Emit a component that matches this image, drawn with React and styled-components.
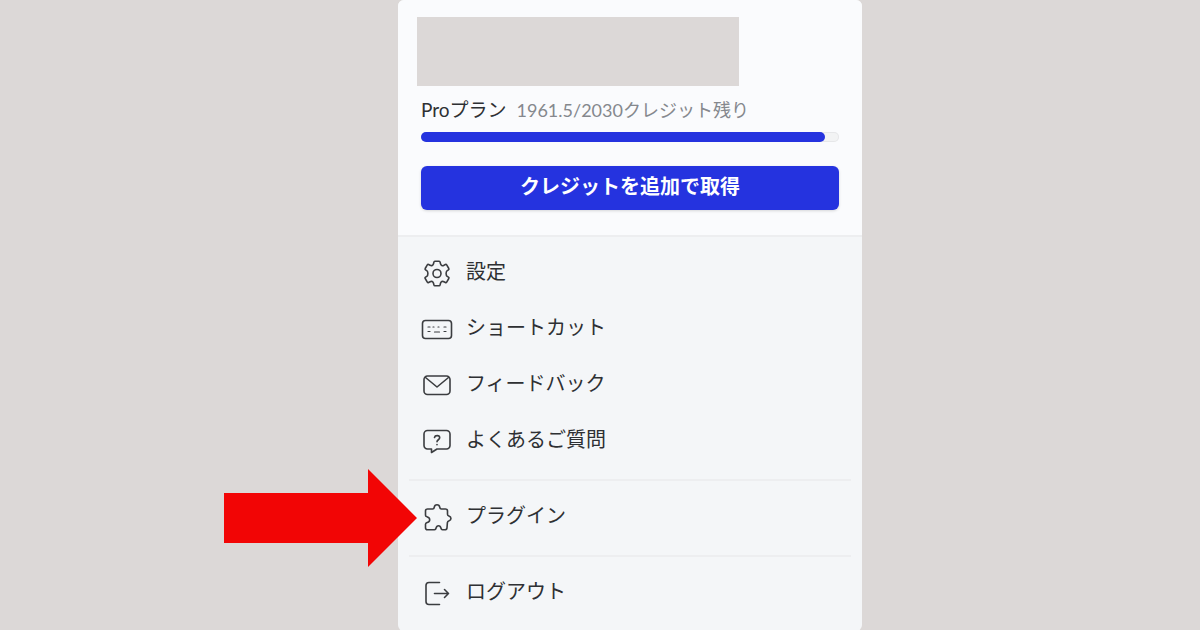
import styled, { createGlobalStyle } from "styled-components";

const GlobalStyle = createGlobalStyle`
    * {
        box-sizing: border-box;
    }
    body {
        margin: 0;
        background-color: #dcd8d7;
        font-family: Lato, "Noto Sans CJK JP", sans-serif;
        color: #2e3033;
    }
`;

const Page = styled.main`
    display: flex;
    justify-content: center;
    min-height: 100vh;
    padding-left: 60px;
`;

const Panel = styled.section`
    display: flex;
    flex-direction: column;
    width: 464px;
    border-radius: 6px;
    background-color: #f4f6f8;
`;

const Account = styled.header`
    padding: 17px 23px 25px;
    border-bottom: 2px solid #edeef0;
    border-radius: 6px 6px 0 0;
    background-color: #fafbfd;
`;

const ProfileBox = styled.div`
    width: 322px;
    height: 69px;
    margin-left: -4px;
    background-color: #dcd8d7;
`;

const PlanRow = styled.div`
    display: flex;
    align-items: baseline;
    gap: 10px;
    margin-top: 9px;
    font-size: 19px;
    line-height: 30px;
    white-space: nowrap;
`;

const Credits = styled.span`
    color: #85888d;
    font-size: 18px;
`;

const Track = styled.div`
    height: 10px;
    margin-top: 7px;
    border-radius: 5px;
    background-color: #f2f3f4;
    box-shadow: inset 0 0 0 1px #e6e7e9;
`;

const Fill = styled.div`
    height: 10px;
    border-radius: 5px;
    background-color: #2533df;
`;

const BuyButton = styled.button`
    width: 100%;
    height: 44px;
    margin-top: 24px;
    padding: 0 0 4px;
    border: none;
    border-radius: 6px;
    background-color: #2533df;
    box-shadow: 0 1px 3px rgba(0, 0, 0, 0.15);
    color: #fff;
    font-family: inherit;
    font-size: 20px;
    font-weight: 700;
    line-height: 40px;
`;

const MenuGroup = styled.ul`
    margin: 0 11px;
    padding: 8px 0 10px;
    border-top: ${(props) => (props.$first ? "none" : "2px solid #edeef0")};
    list-style: none;
`;

const MenuItem = styled.li`
    position: relative;
`;

const MenuButton = styled.button`
    display: flex;
    align-items: center;
    gap: 13px;
    width: 100%;
    height: 56px;
    padding: 0 12px;
    border: none;
    background: none;
    color: inherit;
    font-family: inherit;
    font-size: 20px;
    line-height: 28px;
    text-align: left;
`;

const Label = styled.span`
    padding-bottom: 4px;
`;

const Icon = styled.svg`
    flex: none;
    width: 32px;
    height: 32px;
    fill: none;
    stroke: #3b3d40;
    stroke-width: 1.6;
    stroke-linecap: round;
    stroke-linejoin: round;
`;

const Arrow = styled.svg`
    position: absolute;
    top: -20px;
    right: calc(100% - 8px);
    width: 193px;
    height: 98px;
    fill: #f20505;
`;

const icons = {
    settings: (
        <>
            <path d="M13.9 4.200h4.200q.8 0 1 .9l.4 1.700q.3 1.200 1.300 1.700t2.100-.2l1.500-.8q.8-.4 1.300.4l2.100 3.600q.5.800-.3 1.300l-1.300.9q-1.100.8-1.100 2.800t1.100 2.800l1.300.9q.8.500.3 1.300l-2.100 3.600q-.5.800-1.300.4l-1.500-.8q-1.100-.6-2.100-.2-1 .5-1.300 1.700l-.4 1.700q-.2.900-1 .9h-4.200q-.8 0-1-.9l-.4-1.700q-.3-1.200-1.300-1.700-1-.4-2.100.2l-1.500.8q-.8.4-1.300-.4l-2.100-3.600q-.5-.8.3-1.300l1.300-.9q1.100-.8 1.100-2.800t-1.100-2.800l-1.300-.9q-.8-.5-.3-1.300l2.100-3.600q.5-.8 1.300-.4l1.500.8q1.100.6 2.100.2 1-.5 1.300-1.700l.4-1.700q.2-.9 1-.9z" />
            <circle cx="16" cy="16.500" r="4" />
        </>
    ),
    keyboard: (
        <>
            <rect x="1.5" y="7.5" width="29" height="18" rx="3" />
            <path
                d="M7 14h2M12 14h1M17 14h1M23 14h2M7 18.500h2M23 18.500h2M13.500 19h5"
                strokeWidth="1.2"
            />
        </>
    ),
    mail: (
        <>
            <rect x="3" y="7" width="26" height="18.5" rx="3.5" />
            <path d="M4.500 8.500L16 18 27.500 8.500" />
        </>
    ),
    help: (
        <>
            <path d="M6.500 5.500h19a3.500 3.500 0 0 1 3.500 3.500v11.500a3.500 3.500 0 0 1-3.500 3.500H16l-5.500 3.500V24h-4A3.500 3.500 0 0 1 3 20.500V9a3.500 3.500 0 0 1 3.500-3.500z" />
            <path d="M13.500 12.500c.5-2.500 5.200-2.500 5.200.3 0 2-2.700 1.900-2.700 4M16 19.600v.2" />
        </>
    ),
    plugin: (
        <path d="M6.500 8h5.200c1.300 0 1.500-.8 1.600-1.800.4-3.300 5-3.300 5.400 0 .1 1 .3 1.800 1.600 1.800h4.200q2 0 2 2v3.200c0 1.300.6 1.500 1.500 1.900 2.600 1 2.600 3.800.1 4.700-.9.300-1.600.6-1.700 1.800l-.4 5.200q-.2 2-2.200 2h-2.300c-1.200 0-1.400-.8-1.600-1.800-.6-3-4.200-3-4.800 0-.2 1-.4 1.800-1.600 1.800h-7q-2 0-2-2v-3.600c0-1.200.9-1.400 1.800-1.700 3.200-1 3.200-4.600 0-5.600-.9-.3-1.800-.5-1.800-1.700V10q0-2 2-2z" />
    ),
    logout: (
        <>
            <path d="M18.500 5.500H8a3 3 0 0 0-3 3v16a3 3 0 0 0 3 3h10.500" />
            <path d="M13.500 16.500h14M23.500 12.500l4 4-4 4" />
        </>
    ),
};

const menu = [
    [
        { icon: "settings", label: "設定" },
        { icon: "keyboard", label: "ショートカット" },
        { icon: "mail", label: "フィードバック" },
        { icon: "help", label: "よくあるご質問" },
    ],
    [{ icon: "plugin", label: "プラグイン", marked: true }],
    [{ icon: "logout", label: "ログアウト" }],
];

const credits = { left: 1961.5, total: 2030 };

const App = () => {
    return (
        <Page>
            <GlobalStyle />
            <Panel>
                <Account>
                    <ProfileBox />
                    <PlanRow>
                        <span>Proプラン</span>
                        <Credits>
                            {credits.left}/{credits.total}クレジット残り
                        </Credits>
                    </PlanRow>
                    <Track>
                        <Fill
                            style={{
                                width: `${(credits.left / credits.total) * 100}%`,
                            }}
                        />
                    </Track>
                    <BuyButton>クレジットを追加で取得</BuyButton>
                </Account>
                <nav>
                    {menu.map((group, index) => (
                        <MenuGroup key={index} $first={index === 0}>
                            {group.map((item) => (
                                <MenuItem key={item.label}>
                                    {item.marked && (
                                        <Arrow viewBox="0 0 193 98">
                                            <path d="M0 24h144V0l49 49-49 49V74H0z" />
                                        </Arrow>
                                    )}
                                    <MenuButton>
                                        <Icon viewBox="0 0 32 32">
                                            {icons[item.icon]}
                                        </Icon>
                                        <Label>{item.label}</Label>
                                    </MenuButton>
                                </MenuItem>
                            ))}
                        </MenuGroup>
                    ))}
                </nav>
            </Panel>
        </Page>
    );
};

export default App;
